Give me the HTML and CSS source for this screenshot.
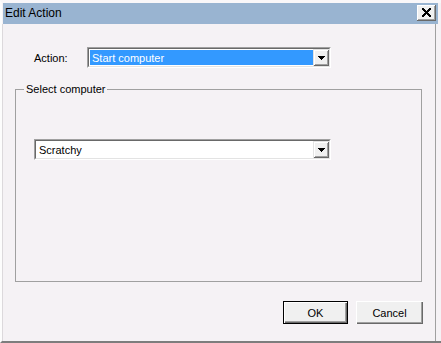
FILE: index.html
```html
<!DOCTYPE html>
<html>
<head>
<meta charset="utf-8">
<title>Edit Action</title>
<link rel="stylesheet" href="styles.css">
</head>
<body>
<div class="window">
  <div class="titlebar">
    <span class="title">Edit Action</span>
    <button class="close" aria-label="Close">
      <svg width="9" height="9" viewBox="0 0 9 9" shape-rendering="crispEdges" fill="#000">
        <rect x="0" y="0" width="2" height="1"/><rect x="7" y="0" width="2" height="1"/>
        <rect x="0" y="1" width="3" height="1"/><rect x="6" y="1" width="3" height="1"/>
        <rect x="1" y="2" width="3" height="1"/><rect x="5" y="2" width="3" height="1"/>
        <rect x="2" y="3" width="5" height="1"/>
        <rect x="3" y="4" width="3" height="1"/>
        <rect x="2" y="5" width="5" height="1"/>
        <rect x="1" y="6" width="3" height="1"/><rect x="5" y="6" width="3" height="1"/>
        <rect x="0" y="7" width="3" height="1"/><rect x="6" y="7" width="3" height="1"/>
        <rect x="0" y="8" width="2" height="1"/><rect x="7" y="8" width="2" height="1"/>
      </svg>
    </button>
  </div>
  <div class="client">
    <div class="action-row">
      <span class="label">Action:</span>
      <div class="combo action-combo">
        <div class="combo-inner">
          <div class="combo-field"><span class="combo-text selected">Start computer</span></div>
          <div class="combo-btn">
            <svg width="7" height="4" viewBox="0 0 7 4" shape-rendering="crispEdges"><path d="M0 0h7v1h-1v1h-1v1h-1v1h-1v-1h-1v-1h-1v-1h-1z" fill="#000"/></svg>
          </div>
        </div>
      </div>
    </div>
    <fieldset class="group">
      <legend>Select computer</legend>
      <div class="group-body">
        <div class="combo computer-combo">
          <div class="combo-inner">
            <div class="combo-field"><span class="combo-text">Scratchy</span></div>
            <div class="combo-btn">
              <svg width="7" height="4" viewBox="0 0 7 4" shape-rendering="crispEdges"><path d="M0 0h7v1h-1v1h-1v1h-1v1h-1v-1h-1v-1h-1v-1h-1z" fill="#000"/></svg>
            </div>
          </div>
        </div>
      </div>
    </fieldset>
    <div class="buttons">
      <button class="btn btn-ok">OK</button>
      <button class="btn btn-cancel">Cancel</button>
    </div>
  </div>
</div>
</body>
</html>
```

FILE: styles.css
```css
html, body {
  margin: 0;
  padding: 0;
}
body {
  width: 441px;
  height: 343px;
  overflow: hidden;
  background: #f5f2f5;
  font-family: "Liberation Sans", Arial, sans-serif;
  font-size: 11px;
  color: #000;
}
.window {
  box-sizing: border-box;
  width: 441px;
  height: 343px;
  border-top: 3px solid #f9f7f9;
  border-left: 2px solid #fdfdfd;
  border-bottom: 2px solid #7d7d7d;
  display: flex;
  flex-direction: column;
  background: #f5f2f5;
}
.titlebar {
  flex: none;
  height: 21px;
  width: 435px;
  margin-left: 1px;
  background: #99b4d1;
  display: flex;
  align-items: flex-start;
  justify-content: space-between;
}
.title {
  font-size: 12px;
  line-height: 21px;
  padding-left: 2px;
  color: #000;
}
.close {
  box-sizing: border-box;
  width: 19px;
  height: 16px;
  margin: 2px 2px 0 0;
  padding: 0;
  border: none;
  background: #f0f0f0;
  box-shadow: inset -1px -1px #696969, inset 1px 1px #fff, inset -2px -2px #a0a0a0, inset 2px 2px #f0f0f0;
  display: flex;
  align-items: center;
  justify-content: center;
}
.close svg {
  display: block;
  margin: 0 1px 1px 0;
}
.client {
  flex: 1;
  margin-right: 5px;
  border-left: 1px solid #dcd9dc;
  border-right: 1px solid #a0a0a0;
  display: flex;
  flex-direction: column;
}
.action-row {
  display: flex;
  align-items: center;
  margin-top: 23px;
  padding-left: 31px;
}
.label {
  width: 53px;
}
.combo {
  box-sizing: border-box;
  height: 21px;
  border: 1px solid;
  border-color: #a0a0a0 #fff #fff #a0a0a0;
  background: #fff;
}
.action-combo {
  width: 244px;
}
.computer-combo {
  width: 297px;
}
.combo-inner {
  box-sizing: border-box;
  height: 100%;
  border: 1px solid;
  border-color: #696969 #e3e3e3 #e3e3e3 #696969;
  display: flex;
}
.combo-field {
  flex: 1;
  padding: 1px 0 1px 1px;
  display: flex;
}
.combo-text {
  flex: 1;
  display: flex;
  align-items: center;
  padding-left: 2px;
}
.combo-text.selected {
  background: #3399ff;
  color: #fff;
}
.combo-btn {
  box-sizing: border-box;
  width: 16px;
  background: #f0f0f0;
  box-shadow: inset 1px 1px #e3e3e3, inset -1px -1px #696969, inset 2px 2px #fff, inset -2px -2px #a0a0a0;
  display: flex;
  align-items: center;
  justify-content: center;
}
.combo-btn svg {
  display: block;
  margin: 1px 0 0 1px;
}
.group {
  box-sizing: border-box;
  width: 407px;
  min-width: 0;
  margin: 15px 0 0 12px;
  padding: 0;
  border: 1px solid #a0a0a0;
}
.group legend {
  margin-left: 8px;
  padding: 0 2px;
  line-height: 13px;
  font-size: 11px;
}
.group-body {
  box-sizing: border-box;
  height: 185px;
  padding: 43px 0 0 18px;
}
.buttons {
  display: flex;
  justify-content: flex-end;
  gap: 8px;
  margin-top: 19px;
  padding-right: 12px;
}
.btn {
  box-sizing: border-box;
  height: 23px;
  padding: 0;
  border: none;
  font-family: "Liberation Sans", Arial, sans-serif;
  font-size: 11px;
  color: #000;
  background: #f0f0f0;
}
.btn-ok {
  width: 65px;
  border: 1px solid #000;
  box-shadow: inset 1px 1px #fff, inset -1px -1px #696969, inset -2px -2px #a0a0a0;
}
.btn-cancel {
  width: 67px;
  box-shadow: inset 1px 1px #fff, inset -1px -1px #696969, inset -2px -2px #a0a0a0;
}
```
